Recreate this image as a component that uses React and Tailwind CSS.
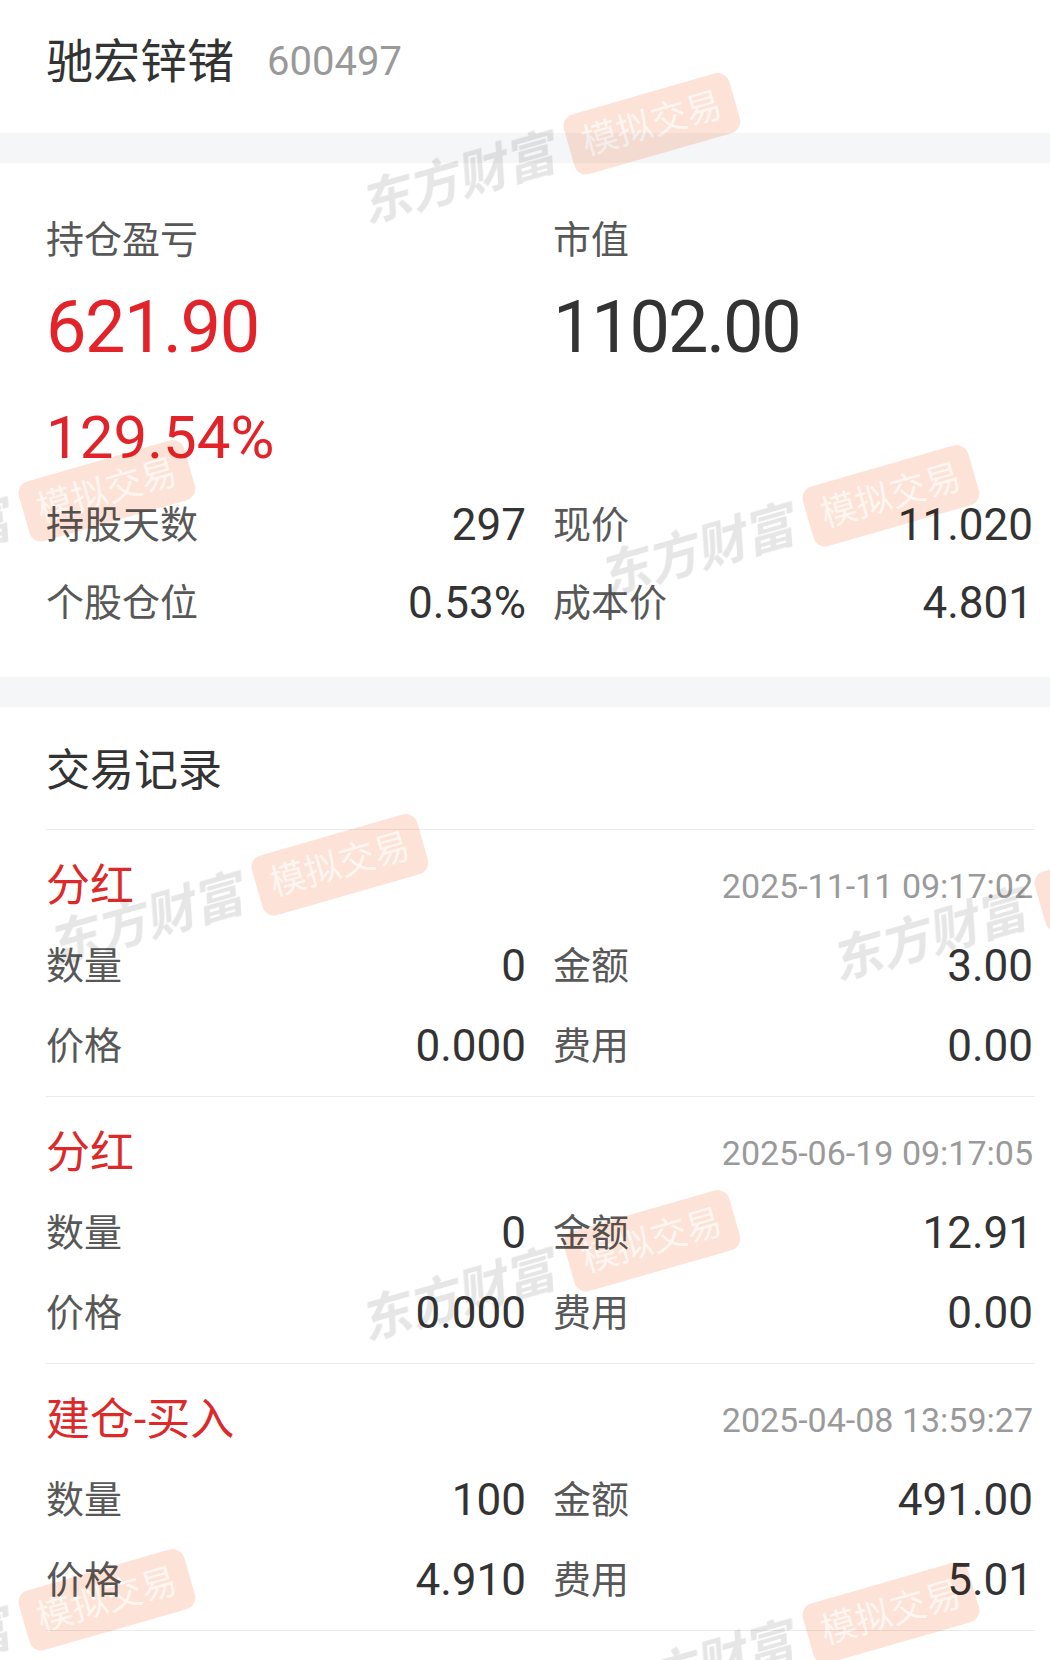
import React from 'react';

const records = [
  { type: '分红', time: '2025-11-11 09:17:02', qty: '0', amount: '3.00', price: '0.000', fee: '0.00' },
  { type: '分红', time: '2025-06-19 09:17:05', qty: '0', amount: '12.91', price: '0.000', fee: '0.00' },
  { type: '建仓-买入', time: '2025-04-08 13:59:27', qty: '100', amount: '491.00', price: '4.910', fee: '5.01' },
];

// watermark centres, in page pixels
const marks = [
  [550, 153], [5, 520], [789, 525], [238, 894], [1021, 910], [550, 1270], [5, 1629], [789, 1642],
];

function Watermark({ x, y }) {
  return (
    <div
      className="absolute flex items-center gap-[12px] -translate-x-1/2 -translate-y-1/2 rotate-[-16deg]"
      style={{ left: x, top: y }}
    >
      <span className="inline-block skew-x-[-12deg] text-[50px] font-bold leading-none text-[#e6e6e6] whitespace-nowrap">东方财富</span>
      <span className="h-[62px] px-[14px] flex items-center rounded-[12px] bg-[#fde3d7] text-[36px] leading-none text-[#fff6f2] whitespace-nowrap">
        模拟交易
      </span>
    </div>
  );
}

function Cell({ label, value, h = 'h-[78px]' }) {
  return (
    <div className={`${h} flex items-center justify-between`}>
      <span className="text-[38px] leading-none text-[#585858]">{label}</span>
      <span className="text-[44px] leading-none text-[#333333]">{value}</span>
    </div>
  );
}

function Record({ r }) {
  return (
    <div>
      <div className="pl-[46px] pr-[17px] pt-[16px] pb-[10px]">
        <div className="h-[80px] flex items-center justify-between">
          <span className="text-[44px] leading-none text-[#dc2a2a]">{r.type}</span>
          <span className="text-[34px] leading-none text-[#9a9a9a]">{r.time}</span>
        </div>
        <div className="grid grid-cols-2 gap-x-[27px]">
          <Cell label="数量" value={r.qty} h="h-[80px]" />
          <Cell label="金额" value={r.amount} h="h-[80px]" />
          <Cell label="价格" value={r.price} h="h-[80px]" />
          <Cell label="费用" value={r.fee} h="h-[80px]" />
        </div>
      </div>
      <div className="ml-[46px] mr-[15px] h-px bg-[#ececec]" />
    </div>
  );
}

export default function App() {
  return (
    <div className="relative w-full min-h-[1660px] bg-white overflow-hidden font-['Roboto','Noto_Sans_CJK_SC',sans-serif]">
      <header className="h-[133px] pl-[46px] flex items-center pb-[10px]">
        <h1 className="text-[47px] leading-none text-[#333333]">驰宏锌锗</h1>
        <span className="ml-[33px] text-[40px] leading-none text-[#999999]">600497</span>
      </header>

      <div className="h-[30px] bg-[#f5f6f8]" />

      <section className="pl-[46px] pr-[17px] pt-[51px] pb-[35px]">
        <div className="grid grid-cols-2 gap-x-[27px]">
          <div>
            <div className="h-[52px] flex items-center text-[38px] leading-none text-[#585858]">持仓盈亏</div>
            <div className="h-[124px] flex items-center text-[72px] leading-none tracking-[-0.02em] text-[#e3232a]">621.90</div>
            <div className="h-[96px] flex items-center text-[60px] leading-none text-[#e3232a]">129.54%</div>
          </div>
          <div>
            <div className="h-[52px] flex items-center text-[38px] leading-none text-[#585858]">市值</div>
            <div className="h-[124px] flex items-center text-[72px] leading-none tracking-[-0.03em] text-[#333333]">1102.00</div>
          </div>
        </div>
        <div className="grid grid-cols-2 gap-x-[27px]">
          <Cell label="持股天数" value="297" />
          <Cell label="现价" value="11.020" />
          <Cell label="个股仓位" value="0.53%" />
          <Cell label="成本价" value="4.801" />
        </div>
      </section>

      <div className="h-[30px] bg-[#f5f6f8]" />

      <section>
        <div className="h-[122px] pl-[46px] pt-[6px] flex items-center">
          <h2 className="text-[44px] leading-none text-[#333333]">交易记录</h2>
        </div>
        <div className="ml-[46px] mr-[15px] h-px bg-[#ececec]" />
        {records.map((r, i) => (
          <Record key={i} r={r} />
        ))}
      </section>

      <div className="pointer-events-none absolute inset-0 mix-blend-multiply">
        {marks.map(([x, y], i) => (
          <Watermark key={i} x={x} y={y} />
        ))}
      </div>
    </div>
  );
}
